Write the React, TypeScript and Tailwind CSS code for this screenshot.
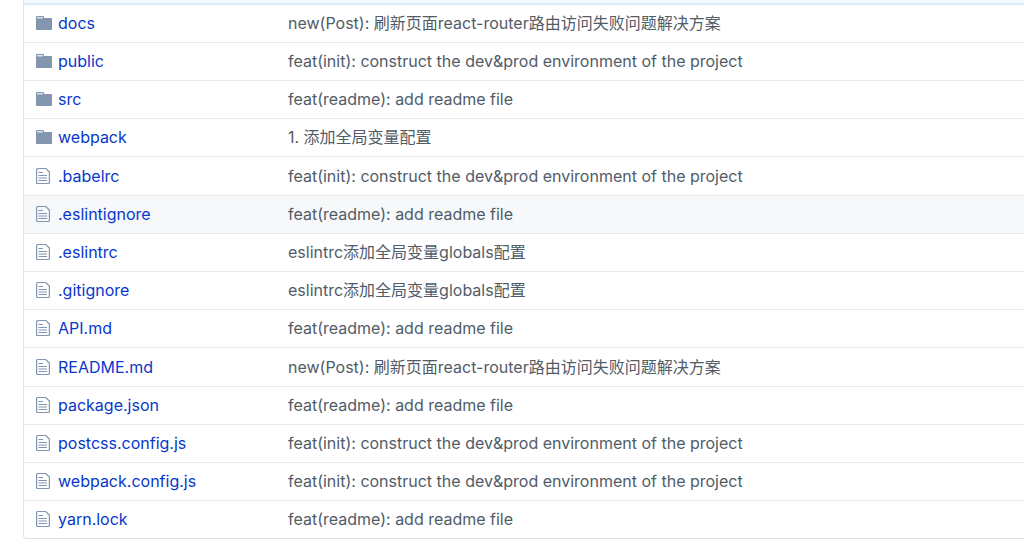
type Entry = { name: string; message: string; dir?: boolean; active?: boolean };

const INIT = "feat(init): construct the dev&prod environment of the project";
const README = "feat(readme): add readme file";
const POST = "new(Post): 刷新页面react-router路由访问失败问题解决方案";
const GLOBALS = "eslintrc添加全局变量globals配置";

const entries: Entry[] = [
  { name: "docs", message: POST, dir: true },
  { name: "public", message: INIT, dir: true },
  { name: "src", message: README, dir: true },
  { name: "webpack", message: "1. 添加全局变量配置", dir: true },
  { name: ".babelrc", message: INIT },
  { name: ".eslintignore", message: README, active: true },
  { name: ".eslintrc", message: GLOBALS },
  { name: ".gitignore", message: GLOBALS },
  { name: "API.md", message: README },
  { name: "README.md", message: POST },
  { name: "package.json", message: README },
  { name: "postcss.config.js", message: INIT },
  { name: "webpack.config.js", message: INIT },
  { name: "yarn.lock", message: README },
];

function FolderIcon() {
  return (
    <svg className="block h-[18px] w-4" viewBox="0 0 16 18" aria-hidden="true">
      <path fill="#8296b0" d="M1 2h6c.6 0 1 .4 1 1v1h7c.6 0 1 .4 1 1v10c0 .6-.4 1-1 1H1c-.6 0-1-.4-1-1V3c0-.6.4-1 1-1z" />
      <path fill="#dce3ea" d="M1 3h6v1.500H1z" />
    </svg>
  );
}

function FileIcon() {
  return (
    <svg className="block h-[18px] w-[14px]" viewBox="0 0 14 18" aria-hidden="true">
      <path
        fill="none"
        stroke="#8296b0"
        strokeWidth="1.2"
        d="M1.600 1.500H9.800L13.400 5.100V15.500c0 .6-.4 1-1 1H1.600c-.6 0-1-.4-1-1v-13c0-.6.4-1 1-1z"
      />
      <path fill="none" stroke="#8296b0" d="M2.500 5.500h4.500M2.500 8.500h8.500M2.500 11h8.500M2.500 13.500h8.500" />
    </svg>
  );
}

export default function App() {
  return (
    <main className="min-h-screen bg-white pl-[23px] font-['Inter','Noto_Sans_CJK_SC',sans-serif] text-[16px] leading-6">
      <div className="overflow-hidden rounded-bl-[4px] border-b border-l border-[#dfe2e5]">
        <div className="h-[5px] border-b-2 border-[#dbe9fb] bg-[#f1f8ff]" />
        <table className="w-full table-fixed border-collapse">
          <colgroup>
            <col className="w-[34px]" />
            <col className="w-[230px]" />
            <col />
          </colgroup>
          <tbody>
            {entries.map((e) => (
              <tr
                key={e.name}
                className={`h-[38px] border-t border-[#e6e8eb] first:h-[37px] first:border-t-0 nth-[5n]:h-[39px] ${e.active ? "bg-[#f6f8fa]" : ""}`}
              >
                <td className="p-0 pl-3">{e.dir ? <FolderIcon /> : <FileIcon />}</td>
                <td className="p-0">
                  <a href={`#${e.name}`} className="text-[#0837cc]">{e.name}</a>
                </td>
                <td className="truncate p-0 text-[#505c68]">{e.message}</td>
              </tr>
            ))}
          </tbody>
        </table>
      </div>
    </main>
  );
}
